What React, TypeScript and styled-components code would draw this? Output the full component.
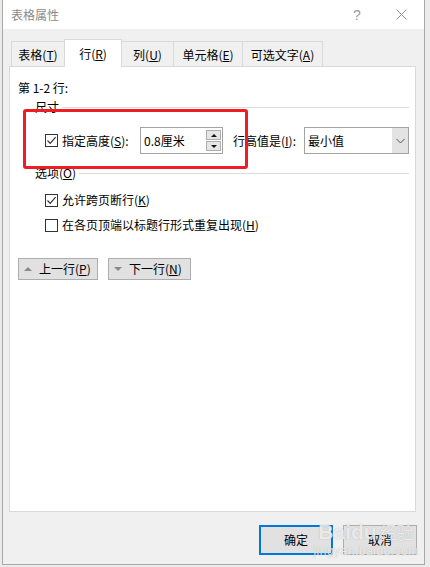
import React from "react";
import styled, { createGlobalStyle } from "styled-components";

const Global = createGlobalStyle`
  html, body { margin: 0; padding: 0; background: #ebebeb; }
  body {
    font-family: "Noto Sans CJK SC", "Noto Sans", sans-serif;
    font-size: 12px;
    color: #000;
  }
  * { box-sizing: border-box; }
`;

const Dialog = styled.div`
  position: relative;
  margin-left: 2px;
  width: 423px;
  height: 565px;
  border: 1px solid #a9a9a9;
  border-top: none;
  background: #f0f0f0;
  display: flex;
  flex-direction: column;
`;

const TitleBar = styled.div`
  height: 29px;
  background: #fff;
  display: flex;
  align-items: center;
  padding-left: 8px;
`;

const Title = styled.div`
  flex: 1;
  color: #8a8a8a;
  line-height: 16px;
`;

const TitleButton = styled.div<{ $w: number }>`
  width: ${(p) => p.$w}px;
  height: 29px;
  display: flex;
  align-items: center;
  justify-content: center;
  color: #9a9a9a;
  font-size: 14px;
  font-family: "Liberation Sans", sans-serif;
`;

const Body = styled.div`
  flex: 1;
  display: flex;
  flex-direction: column;
  padding: 10px 8px 0 6px;
`;

const TabStrip = styled.div`
  height: 27px;
  padding-left: 2px;
  display: flex;
  align-items: flex-end;
`;

const Tab = styled.div<{ $w: number; $active?: boolean }>`
  position: relative;
  z-index: ${(p) => (p.$active ? 2 : 1)};
  width: ${(p) => p.$w}px;
  height: ${(p) => (p.$active ? 28 : 25)}px;
  margin-right: -1px;
  margin-bottom: ${(p) => (p.$active ? -1 : 0)}px;
  border: 1px solid #d9d9d9;
  border-bottom: none;
  background: ${(p) => (p.$active ? "#fff" : "#f0f0f0")};
  display: flex;
  align-items: center;
  justify-content: center;
  line-height: 16px;
  padding-top: ${(p) => (p.$active ? 0 : 2)}px;
  white-space: nowrap;
`;

const Panel = styled.div`
  height: 446px;
  border: 1px solid #d9d9d9;
  background: #fff;
  padding: 13px 6px 0 8px;
  display: flex;
  flex-direction: column;
`;

const Line = styled.div`
  line-height: 16px;
  white-space: nowrap;
`;

const GroupHeader = styled.div<{ $mt: number }>`
  display: flex;
  align-items: center;
  gap: 3px;
  margin-top: ${(p) => p.$mt}px;
  padding-left: 17px;
  line-height: 16px;
  white-space: nowrap;
`;

const Rule = styled.div`
  flex: 1;
  height: 1px;
  background: #dcdcdc;
`;

const Row = styled.div<{ $mt: number; $h?: number }>`
  display: flex;
  align-items: center;
  margin-top: ${(p) => p.$mt}px;
  height: ${(p) => p.$h ?? 16}px;
  padding-left: ${(p) => (p.$h ? 27 : 27)}px;
  line-height: 16px;
  white-space: nowrap;
`;

const Box = styled.div`
  width: 13px;
  height: 13px;
  border: 1px solid #333;
  background: #fff;
  margin-right: 4px;
  display: flex;
  align-items: center;
  justify-content: center;
  flex: none;
`;

const FieldLabel = styled.div<{ $w: number }>`
  width: ${(p) => p.$w}px;
  flex: none;
  white-space: nowrap;
`;

const SpinBox = styled.div`
  width: 83px;
  height: 27px;
  border: 1px solid #a3a3a3;
  background: #fff;
  display: flex;
  align-items: center;
  padding-left: 3px;
  flex: none;
`;

const SpinValue = styled.div`
  flex: 1;
`;

const SpinButtons = styled.div`
  width: 15px;
  height: 21px;
  margin-right: 1px;
  display: flex;
  flex-direction: column;
  gap: 1px;
`;

const SpinBtn = styled.div`
  flex: 1;
  border: 1px solid #adadad;
  background: #e6e6e6;
  display: flex;
  align-items: center;
  justify-content: center;
`;

const Tri = styled.span<{ $dir: "up" | "down"; $size: number; $color: string }>`
  width: 0;
  height: 0;
  border-left: ${(p) => p.$size}px solid transparent;
  border-right: ${(p) => p.$size}px solid transparent;
  ${(p) =>
    p.$dir === "up"
      ? `border-bottom: ${p.$size}px solid ${p.$color};`
      : `border-top: ${p.$size}px solid ${p.$color};`}
`;

const Select = styled.div`
  width: 105px;
  height: 27px;
  border: 1px solid #a3a3a3;
  background: #fff;
  display: flex;
  flex: none;
`;

const SelectValue = styled.div`
  flex: 1;
  display: flex;
  align-items: center;
  padding-left: 3px;
`;

const DropBtn = styled.div`
  width: 16px;
  background: #e3e3e3;
  display: flex;
  align-items: center;
  justify-content: center;
`;

const NavRow = styled.div`
  display: flex;
  gap: 10px;
  margin-top: 25px;
`;

const NavButton = styled.div<{ $w: number }>`
  width: ${(p) => p.$w}px;
  height: 22px;
  border: 1px solid #adadad;
  background: #e1e1e1;
  display: flex;
  align-items: center;
  gap: 7px;
  padding-left: 5px;
  line-height: 16px;
  white-space: nowrap;
`;

const Footer = styled.div`
  display: flex;
  justify-content: flex-end;
  gap: 10px;
  margin-top: 13px;
  margin-right: -1px;
`;

const DialogButton = styled.div<{ $primary?: boolean }>`
  width: 74px;
  height: 30px;
  background: #e1e1e1;
  border: ${(p) => (p.$primary ? "2px solid #0078d7" : "1px solid #adadad")};
  display: flex;
  align-items: center;
  justify-content: center;
  line-height: 16px;
`;

const Highlight = styled.div`
  position: absolute;
  left: 20px;
  top: 109px;
  width: 225px;
  height: 60px;
  border: 3px solid #ee1d23;
  border-radius: 3px;
  pointer-events: none;
`;

const Watermark = styled.div`
  position: absolute;
  right: 6px;
  bottom: 6px;
  width: 104px;
  display: flex;
  flex-direction: column;
  align-items: center;
  color: rgba(255, 255, 255, 0.75);
  text-shadow: 0 0 1px rgba(120, 120, 120, 0.55);
  pointer-events: none;
`;

const MarkTop = styled.div`
  display: flex;
  align-items: baseline;
  gap: 3px;
  font-family: "Liberation Sans", sans-serif;
  font-size: 21px;
  font-weight: bold;
  line-height: 24px;
`;

const MarkCn = styled.span`
  font-family: "Noto Sans CJK SC", sans-serif;
  font-size: 17px;
  font-weight: normal;
`;

const MarkUrl = styled.div`
  font-family: "Liberation Sans", sans-serif;
  font-size: 12px;
  line-height: 14px;
  letter-spacing: 0.5px;
`;

const Check = () => (
  <svg width="11" height="11" viewBox="0 0 11 11">
    <path d="M1.5 5.5 L4.2 8.3 L9.6 2.2" fill="none" stroke="#333" strokeWidth="1.2" />
  </svg>
);

const CheckBox = ({ checked }: { checked?: boolean }) => <Box>{checked ? <Check /> : null}</Box>;

const Chevron = () => (
  <svg width="9" height="6" viewBox="0 0 9 6">
    <path d="M0.5 1 L4.5 5 L8.5 1" fill="none" stroke="#555" strokeWidth="1" />
  </svg>
);

const CloseIcon = () => (
  <svg width="11" height="11" viewBox="0 0 11 11">
    <path d="M0.5 0.5 L10.5 10.5 M10.5 0.5 L0.5 10.5" stroke="#8f8f8f" strokeWidth="1" />
  </svg>
);

export default function App() {
  return (
    <>
      <Global />
      <Dialog>
        <TitleBar>
          <Title>表格属性</Title>
          <TitleButton $w={44}>?</TitleButton>
          <TitleButton $w={45}>
            <CloseIcon />
          </TitleButton>
        </TitleBar>
        <Body>
          <TabStrip>
            <Tab $w={54}>
              表格(<u>T</u>)
            </Tab>
            <Tab $w={58} $active>
              行(<u>R</u>)
            </Tab>
            <Tab $w={53}>
              列(<u>U</u>)
            </Tab>
            <Tab $w={70}>
              单元格(<u>E</u>)
            </Tab>
            <Tab $w={81}>
              可选文字(<u>A</u>)
            </Tab>
          </TabStrip>
          <Panel>
            <Line>第 1-2 行:</Line>
            <GroupHeader $mt={3}>
              尺寸
              <Rule />
            </GroupHeader>
            <Row $mt={12} $h={27}>
              <CheckBox checked />
              <FieldLabel $w={78}>
                指定高度(<u>S</u>):
              </FieldLabel>
              <SpinBox>
                <SpinValue>0.8厘米</SpinValue>
                <SpinButtons>
                  <SpinBtn>
                    <Tri $dir="up" $size={3} $color="#111" />
                  </SpinBtn>
                  <SpinBtn>
                    <Tri $dir="down" $size={3} $color="#111" />
                  </SpinBtn>
                </SpinButtons>
              </SpinBox>
              <FieldLabel $w={71} style={{ marginLeft: 10 }}>
                行高值是(<u>I</u>):
              </FieldLabel>
              <Select>
                <SelectValue>最小值</SelectValue>
                <DropBtn>
                  <Chevron />
                </DropBtn>
              </Select>
            </Row>
            <GroupHeader $mt={11}>
              <span>
                选项(<u>O</u>)
              </span>
              <Rule />
            </GroupHeader>
            <Row $mt={11}>
              <CheckBox checked />
              允许跨页断行(<u>K</u>)
            </Row>
            <Row $mt={9}>
              <CheckBox />
              在各页顶端以标题行形式重复出现(<u>H</u>)
            </Row>
            <NavRow>
              <NavButton $w={80}>
                <Tri $dir="up" $size={4} $color="#8a8a8a" />
                <span>
                  上一行(<u>P</u>)
                </span>
              </NavButton>
              <NavButton $w={83}>
                <Tri $dir="down" $size={4} $color="#8a8a8a" />
                <span>
                  下一行(<u>N</u>)
                </span>
              </NavButton>
            </NavRow>
          </Panel>
          <Footer>
            <DialogButton $primary>确定</DialogButton>
            <DialogButton>取消</DialogButton>
          </Footer>
        </Body>
        <Highlight />
        <Watermark>
          <MarkTop>
            Baidu<MarkCn>经验</MarkCn>
          </MarkTop>
          <MarkUrl>jingyan.baidu.com</MarkUrl>
        </Watermark>
      </Dialog>
    </>
  );
}
